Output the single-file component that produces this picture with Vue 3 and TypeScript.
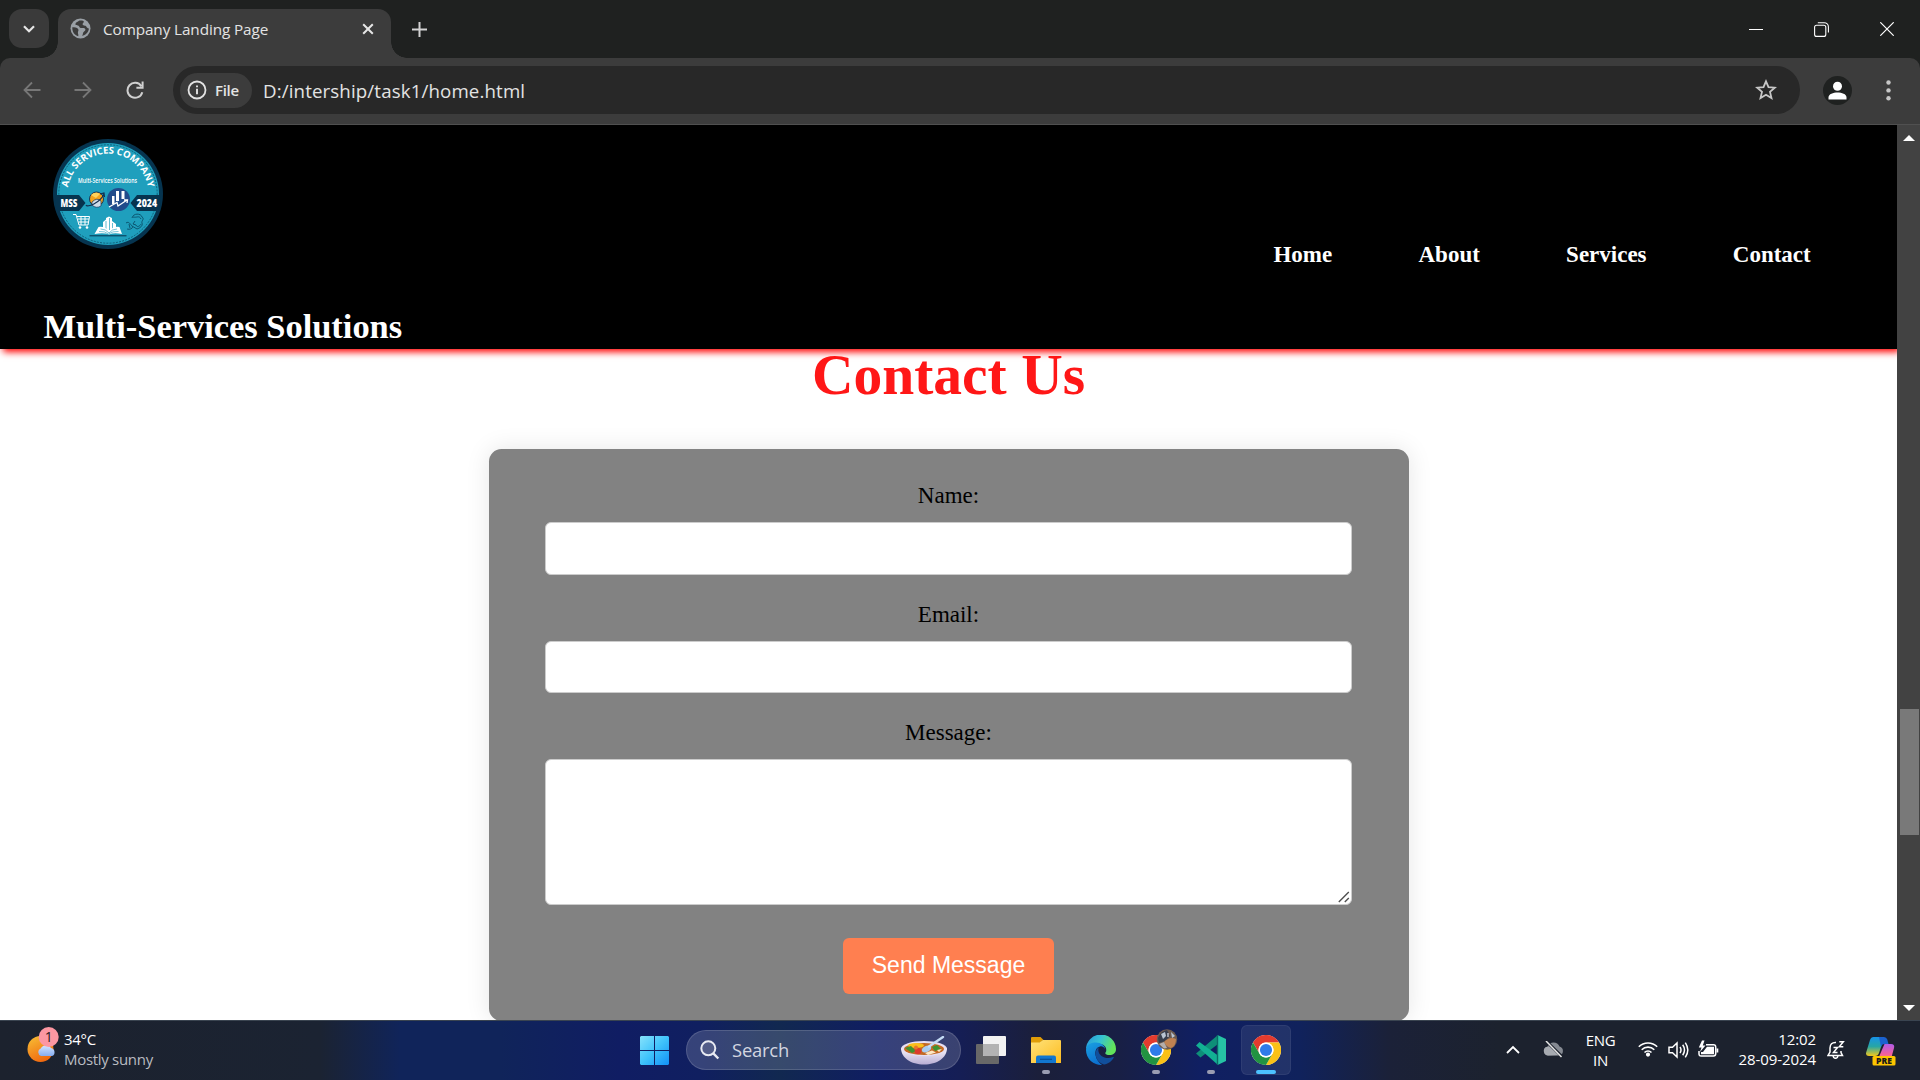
<script setup lang="ts">
import { ref } from 'vue'

const links: string[] = ['Home', 'About', 'Services', 'Contact']
const name = ref('')
const email = ref('')
const message = ref('')
</script>

<template>
  <div class="screen">
    <svg class="defs" width="0" height="0">
      <symbol id="chrome" viewBox="0 0 48 48">
        <circle cx="24" cy="24" r="24" fill="#fff" />
        <path d="M3.2 12A24 24 0 0 1 44.8 12H24A12 12 0 0 0 13.6 30Z" fill="#e33b2e" />
        <path d="M44.8 12A24 24 0 0 1 24 48L34.4 30A12 12 0 0 0 24 12Z" fill="#fbc116" />
        <path d="M24 48A24 24 0 0 1 3.2 12L13.6 30A12 12 0 0 0 34.4 30Z" fill="#229342" />
        <circle cx="24" cy="24" r="12" fill="#fff" />
        <circle cx="24" cy="24" r="9.7" fill="#2f7bea" />
      </symbol>
    </svg>

    <div class="tabstrip">
      <div class="tab-search">
        <svg width="12" height="8" viewBox="0 0 12 8"><path d="M1 1.2l5 5 5-5" fill="none" stroke="#e6e6e6" stroke-width="2.2" /></svg>
      </div>
      <div class="tab">
        <svg width="21" height="21" viewBox="0 0 21 21">
          <circle cx="10.5" cy="10.5" r="10" fill="#9aa0a6" />
          <path d="M9.4 2.6c-1 1.300-3.800 1.600-4 3.400-.1 1.300 1.400 1.300 2.600 1.400 1.600.1 1.100 2.300 2.600 2.600 1.500.3 3.800-.6 4.600.9.9 1.700-1.400 2.300-2 3.600-.4 1-.2 2.400-1.300 3.200 3.700-.5 6.900-3.800 7-7.300-1.300-.1-2.100-.8-2.600-1.900-.8-1.300-3.400-.5-3.700-2.200-.2-1.200 1.300-1.600 1.300-2.500 0-.8-1.800-1.400-4.500-1.200z" fill="#3c3c3c" />
          <path d="M2.300 9.300c2.200.1 4.700.2 5.800 1.800.9 1.300-.1 2.200-.2 3.300-.1 1.200.9 2.400.3 3.800-3.500-.8-6.100-4.300-5.900-8.900z" fill="#3c3c3c" />
        </svg>
        <span class="tab-title">Company Landing Page</span>
        <svg width="12" height="12" viewBox="0 0 12 12"><path d="M1.200 1.200l9.600 9.600M10.800 1.200L1.200 10.800" stroke="#e6e6e6" stroke-width="2" /></svg>
      </div>
      <svg class="plus" width="15" height="15" viewBox="0 0 15 15"><path d="M7.500 0v15M0 7.500h15" stroke="#d2d2d2" stroke-width="2" /></svg>
      <div class="win">
        <svg width="14" height="14" viewBox="0 0 14 14"><path d="M0 7.500h14" stroke="#fff" /></svg>
        <svg width="15" height="15" viewBox="0 0 15 15" fill="none" stroke="#fff" stroke-width="1.100"><rect x=".6" y="3.200" width="11.200" height="11.200" rx="2" /><path d="M3.800.7h6.400a4.200 4.200 0 0 1 4.200 4.200v5.600" /></svg>
        <svg width="14" height="14" viewBox="0 0 14 14"><path d="M.3.3l13.400 13.400M13.700.3L.3 13.700" stroke="#fff" stroke-width="1.200" /></svg>
      </div>
    </div>

    <div class="toolbar">
      <div class="corners"><div class="toolbar-body">
        <svg class="i-back" width="18" height="18" viewBox="0 0 18 18"><path d="M17.500 9H1.800M9 1.500L1.500 9 9 16.500" fill="none" stroke="#777" stroke-width="1.800" /></svg>
        <svg class="i-fwd" width="18" height="18" viewBox="0 0 18 18"><path d="M.5 9h15.700M9 1.500L16.500 9 9 16.500" fill="none" stroke="#777" stroke-width="1.800" /></svg>
        <svg class="i-reload" width="18" height="18" viewBox="0 0 18 18"><path d="M15.300 5.200A7.500 7.500 0 1 0 16.300 11.200M16.600.6v6.200h-6.200" fill="none" stroke="#d0d0d0" stroke-width="2" /></svg>
        <div class="omnibox">
          <div class="chip">
            <svg width="20" height="20" viewBox="0 0 20 20"><circle cx="10" cy="10" r="8.500" fill="none" stroke="#e3e3e3" stroke-width="1.800" /><path d="M10 8.800v5.400M10 5.400v1.900" stroke="#e3e3e3" stroke-width="1.900" /></svg>
            <span>File</span>
          </div>
          <span class="url">D:/intership/task1/home.html</span>
          <svg class="star" width="24" height="24" viewBox="0 0 24 24"><path d="M12 3.300l2.500 5.900 6.300.5-4.800 4.200 1.500 6.200-5.500-3.300-5.500 3.300L8 13.900 3.200 9.700l6.300-.5z" fill="none" stroke="#c7c7c7" stroke-width="1.800" /></svg>
        </div>
        <svg class="avatar" width="29" height="29" viewBox="0 0 29 29"><circle cx="14.500" cy="14.500" r="14.500" fill="#1f2120" /><circle cx="14.500" cy="10.300" r="4.500" fill="#fff" /><path d="M5.500 23.500v-2c0-3.600 4.800-5 9-5s9 1.400 9 5v2z" fill="#fff" /></svg>
        <svg class="dots" width="5" height="21" viewBox="0 0 5 21" fill="#c7c7c7"><circle cx="2.500" cy="2.500" r="2.200" /><circle cx="2.500" cy="10.400" r="2.200" /><circle cx="2.500" cy="18.300" r="2.200" /></svg>
      </div></div>
    </div>

    <div class="viewport">
      <div class="page">
        <header>
          <div class="brand">
            <svg class="logo" width="110" height="110" viewBox="0 0 110 110">
              <defs><path id="arc" d="M14.800 49.500A40.600 40.600 0 0 1 95.200 49.500" /></defs>
              <circle cx="55" cy="55" r="55" fill="#06344f" />
              <circle cx="55" cy="55" r="51" fill="#1f9fbd" />
              <circle cx="55" cy="55" r="49.200" fill="none" stroke="#0b4f68" stroke-width=".8" stroke-dasharray="2 1.200" />
              <text class="ring" fill="#fff"><textPath href="#arc" startOffset="50%" text-anchor="middle" textLength="114" lengthAdjust="spacingAndGlyphs">ALL SERVICES COMPANY</textPath></text>
              <text x="25" y="43.500" class="tiny" textLength="59" lengthAdjust="spacingAndGlyphs">Multi-Services Solutions</text>
              <path d="M3 56h23l6.500 8-6.500 8H3A55 55 0 0 1 3 56zM107 56H84l-6.500 8 6.500 8h23a55 55 0 0 0 0-16z" fill="#06344f" />
              <text x="7.500" y="67.700" class="plate" textLength="17" lengthAdjust="spacingAndGlyphs">MSS</text>
              <text x="83.500" y="67.700" class="plate" textLength="20.500" lengthAdjust="spacingAndGlyphs">2024</text>
              <circle cx="43.500" cy="60" r="7" fill="#f4a31c" stroke="#14375c" />
              <path d="M38 56q4-4 9-1l-4 4z" fill="#ffd35c" />
              <path d="M39 63q5-5 9-1v5q-5 3-9-1z" fill="#cfdce8" stroke="#14375c" stroke-width=".7" />
              <path d="M33 66c1 3 14-2 18-11M47 55l4-1 .5 4" fill="none" stroke="#132d4d" stroke-width="1.100" />
              <circle cx="65.500" cy="60.500" r="11.500" fill="#214b8b" />
              <path d="M59 57h2.500v8H59zM63 52h3v10h-3zM68.500 52h3v8h-3z" fill="#fff" />
              <path d="M56 68l8-4.500 1 3.500 9-6M71 61h3.500l-.5 3" fill="none" stroke="#fff" stroke-width="1.300" />
              <path d="M20 75.500h3l3 10.500h9l1.500-8.500H24M25 80h11M25.500 83h10M28 77.500V86M32 77.500V86" fill="none" stroke="#fff" stroke-width="1" />
              <circle cx="27" cy="88.500" r="1.300" fill="#fff" /><circle cx="34" cy="88.500" r="1.300" fill="#fff" />
              <path d="M50 92V83l3-2.500V79l3-1.500 3 1.500v3l4 3v7z" fill="#fff" />
              <path d="M53 82v9M56.500 79v12M59.500 84v7" stroke="#1f9fbd" stroke-width=".7" />
              <path d="M41.500 95l4-7q6-1 10.500 4 4.500-5 10.500-4l2.500 7q-8-1.500-13 .5-5-2-14.500-.5z" fill="#fff" />
              <path d="M46 92.500q6-.5 9.500 2.500 4-3 10-2.500M47.500 90q5-.2 8.500 4 3-4 8-4" fill="none" stroke="#1f9fbd" stroke-width=".6" />
              <path d="M36.500 96.800h37" stroke="#06344f" />
              <path d="M79 79c1-5 9-5 10-1 3 2-1 4 0 6 1 3-2 5-5 6M80 78c4 1 6-2 8 2M82 82l-2 3 3 1c1 3 4 1 5-1M73 84c3-2 4 1 6 3s-2 4-5 3M76 85l1 4M79 87l5 3" fill="none" stroke="#0b5570" stroke-width="1" />
            </svg>
            <h2>Multi-Services Solutions</h2>
          </div>
          <nav><a v-for="l in links" :key="l">{{ l }}</a></nav>
        </header>
        <h1>Contact Us</h1>
        <form class="card" @submit.prevent>
          <label for="name">Name:</label>
          <input id="name" v-model="name" type="text" />
          <label for="email">Email:</label>
          <input id="email" v-model="email" type="email" />
          <label for="message">Message:</label>
          <div class="area">
            <textarea id="message" v-model="message"></textarea>
            <svg class="grip" width="12" height="12" viewBox="0 0 12 12"><path d="M.8 11L10.800 1M6.800 11l4-4" stroke="#505050" stroke-width="1.400" /></svg>
          </div>
          <button type="submit">Send Message</button>
        </form>
      </div>
      <div class="scrollbar">
        <svg width="12" height="6" viewBox="0 0 12 6"><path d="M0 6L6 0l6 6z" fill="#fff" /></svg>
        <div class="thumb"></div>
        <svg class="down" width="12" height="6" viewBox="0 0 12 6"><path d="M0 0l6 6 6-6z" fill="#fff" /></svg>
      </div>
    </div>

    <div class="taskbar">
      <div class="weather">
        <svg width="34" height="36" viewBox="0 0 34 36">
          <defs>
            <linearGradient id="sun" x1="0" y1="0" x2=".5" y2="1"><stop offset="0" stop-color="#f8c136" /><stop offset="1" stop-color="#f06a10" /></linearGradient>
            <linearGradient id="cloud" x1="0" y1="0" x2="0" y2="1"><stop offset="0" stop-color="#d5e5ff" /><stop offset="1" stop-color="#86adf0" /></linearGradient>
          </defs>
          <circle cx="13.500" cy="22" r="13" fill="url(#sun)" />
          <path d="M14 29a4 4 0 0 1-.3-7.500 6 6 0 0 1 10.300-.5 4.200 4.200 0 0 1 1 8z" fill="url(#cloud)" />
          <circle cx="21.700" cy="10" r="10" fill="#fc97a2" />
          <text x="21.700" y="15" text-anchor="middle" class="badge">1</text>
        </svg>
        <div class="two"><span>34°C</span><span class="dim">Mostly sunny</span></div>
      </div>

      <div class="apps">
        <svg class="start" width="29" height="29" viewBox="0 0 29 29">
          <defs><linearGradient id="win" x1="0" y1="0" x2="1" y2="1"><stop offset="0" stop-color="#87e2fb" /><stop offset=".5" stop-color="#3fc3fb" /><stop offset="1" stop-color="#1290f6" /></linearGradient></defs>
          <path d="M1 0h13v14H0V1zM15 0h13l1 1v13H15zM0 15h14v14H1l-1-1zM15 15h14v13l-1 1H15z" fill="url(#win)" />
        </svg>
        <div class="search">
          <svg width="20" height="20" viewBox="0 0 20 20"><circle cx="8.300" cy="8.300" r="7" fill="#6d7699" fill-opacity=".5" stroke="#e8eaf2" stroke-width="2" /><path d="M13.300 13.300l5 5.200" stroke="#e8eaf2" stroke-width="2.400" /></svg>
          <span>Search</span>
          <svg class="bowl" width="46" height="29" viewBox="0 0 46 29">
            <defs><linearGradient id="bw" x1="0" y1="0" x2="0" y2="1"><stop offset="0" stop-color="#f7f4fc" /><stop offset="1" stop-color="#b9aed4" /></linearGradient></defs>
            <path d="M0 12c0 10 10 16.500 23 16.500S46 22 46 12z" fill="url(#bw)" />
            <ellipse cx="23" cy="12.500" rx="23" ry="7.500" fill="#e6dff2" />
            <ellipse cx="23" cy="13" rx="20" ry="6" fill="#c46a24" />
            <ellipse cx="15" cy="9.500" rx="8" ry="2.600" fill="#f9bf1c" />
            <path d="M4 12l6-2 5 5-4 2zM31 11l5-2 4 4-6 2z" fill="#3f9330" />
            <circle cx="17" cy="15" r="3.300" fill="#dc3b2d" /><circle cx="15" cy="11.500" r="2" fill="#e9772a" />
            <path d="M24 17l7-2.500 4 2-8 2.500zM36 14l5-1-3 3z" fill="#fce7c2" />
            <ellipse cx="25.500" cy="13" rx="5" ry="3" transform="rotate(-25 25.500 13)" fill="#a9cdf0" />
            <path d="M28 10.500L42 1" stroke="#c5dcf5" stroke-width="2.400" stroke-linecap="round" />
          </svg>
        </div>
        <svg class="tv" width="30" height="28" viewBox="0 0 30 28"><rect x="0" y="8" width="23" height="20" rx="1" fill="#686868" /><rect x="7" y="0" width="23" height="20" rx="1" fill="#f2f2f2" /><path d="M7 8h16v12H8a1 1 0 0 1-1-1z" fill="#b3b3b3" /></svg>
        <div class="app">
          <svg width="30" height="30" viewBox="0 0 30 30">
            <defs><linearGradient id="fo" x1="0" y1="0" x2="1" y2="1"><stop offset="0" stop-color="#ffe27a" /><stop offset="1" stop-color="#fdbc1f" /></linearGradient></defs>
            <path d="M0 8V3q0-1 1-1h8.500l3 3-4 3z" fill="#e09d08" />
            <path d="M0 7.500h8.500L12 5h17q1 0 1 1v22H0z" fill="url(#fo)" />
            <path d="M5 28v-5.500Q5 20.500 7 20.500h16q2 0 2 2V28z" fill="#1277cf" /><path d="M9 24.300h12" stroke="#0b4f94" stroke-width="1.200" />
          </svg><i class="run"></i>
        </div>
        <div class="app">
          <svg width="30" height="30" viewBox="0 0 30 30">
            <defs>
              <linearGradient id="e1" x1="0" y1="0" x2="1" y2=".35"><stop offset="0" stop-color="#2695dc" /><stop offset=".5" stop-color="#35c1d4" /><stop offset="1" stop-color="#62e45b" /></linearGradient>
              <linearGradient id="e2" x1="0" y1="0" x2=".5" y2="1"><stop offset="0" stop-color="#1aa1e2" /><stop offset="1" stop-color="#0c6fd0" /></linearGradient>
            </defs>
            <path d="M0 15A15 15 0 0 1 30 14c0 4-3 6-6.500 6-3 0-4.800-1-4-2.400 2-3 .3-8.600-6.500-8.600C7 9 0 11 0 15z" fill="url(#e1)" />
            <path d="M0 15C0 9 6 7.500 10 7.500c5 0 9 3 9 6.500-1-2-3-3-5-2.500C7 13 8 24 16 29.900A15 15 0 0 1 0 15z" fill="url(#e2)" />
            <path d="M13 12c-6 4-4 15 5 17.600 4-.6 8-3.600 9.700-6.800.3-.6-.2-1-.8-.7-7 3-14-1.400-14.500-6.100-.1-1.500 0-3 .6-4z" fill="#114f9c" />
          </svg>
        </div>
        <div class="app">
          <svg class="with-face" width="40" height="36" viewBox="0 0 40 36">
            <use href="#chrome" x="0" y="6" width="30" height="30" />
            <circle cx="26" cy="10.500" r="10.200" fill="#6c5a50" />
            <path d="M17 9q3-7 9-8l3 6-5 5-6 2z" fill="#373e4c" />
            <path d="M20 5l4-2 1 4-3 3zM30 3l4 4-3 2z" fill="#b9c5d3" />
            <path d="M23 13q6-6 12-3 0 7-5 9-5-1-7-6z" fill="#c08252" />
            <path d="M18 15l5-2 3 6-3 .5z" fill="#b5aeab" /><path d="M27 4v4" stroke="#d5d5dc" stroke-width="1.300" />
          </svg><i class="run"></i>
        </div>
        <div class="app">
          <svg width="30" height="30" viewBox="0 0 30 30">
            <path d="M0 18.500L22 0v9L4.500 22.500z" fill="#0e8f78" />
            <path d="M0 10.500l3.500-3.500L22 20.500V30z" fill="#12b093" />
            <path d="M21.500 0L30 4v22l-8.500 4z" fill="#26c3a5" /><path d="M21.500 0v30" stroke="#0b6b69" stroke-width="1.400" />
          </svg><i class="run"></i>
        </div>
        <div class="app active">
          <svg width="30" height="30"><use href="#chrome" width="30" height="30" /></svg><i class="run on"></i>
        </div>
      </div>

      <div class="tray">
        <svg width="14" height="9" viewBox="0 0 14 9"><path d="M1 8l6-6 6 6" fill="none" stroke="#fff" stroke-width="1.800" /></svg>
        <svg class="cl" width="21" height="17" viewBox="0 0 21 17"><path d="M5 14.500a4.600 4.600 0 0 1-.4-9A6.500 6.500 0 0 1 16.500 5.500a4.600 4.600 0 0 1-.5 9z" fill="#858a92" /><path d="M5 14.500a4.600 4.600 0 0 1-2-8.500q6-1 9 3l6 5z" fill="#a6aab0" /><path d="M3 0l16.500 16" stroke="#1c222d" stroke-width="3" /><path d="M3 0l15.500 16" stroke="#e8e8e8" stroke-width="1.500" /></svg>
        <div class="two lang"><span>ENG</span><span>IN</span></div>
        <svg class="wifi" width="20" height="16" viewBox="0 0 20 16" fill="none" stroke="#fff" stroke-width="1.600"><path d="M.8 5.800a13 13 0 0 1 18.400 0M3.700 8.700a9 9 0 0 1 12.600 0M6.500 11.500a5 5 0 0 1 7 0" /><circle cx="10" cy="13.600" r="1.300" fill="#fff" /></svg>
        <svg class="vol" width="21" height="18" viewBox="0 0 21 18" fill="none" stroke="#fff" stroke-width="1.500"><path d="M1 6.200h3.500L9 2v14l-4.500-4.200H1zM12 6q2 3 0 6M14.700 3.800q3.600 5.200 0 10.400M17.300 1.600q5 7.400 0 14.800" /></svg>
        <svg class="bat" width="21" height="18" viewBox="0 0 21 18"><path d="M8 4.800h7.500q2.200 0 2.200 2.200v6.800q0 2.200-2.200 2.200H3.200Q1 16 1 13.800V11" fill="none" stroke="#fff" stroke-width="1.500" /><path d="M9 6.700h7v7.500H3V12h2zM18.500 8.500h1.800v4h-1.800z" fill="#fff" /><path d="M4 .5L.8 7.500h2.700L2 12l5.500-6.500H4.800L6.500.5z" fill="#fff" /></svg>
        <div class="two clock"><span>12:02</span><span>28-09-2024</span></div>
        <svg class="bell" width="18" height="18" viewBox="0 0 18 18" fill="none" stroke="#fff"><path d="M9 1.500C5 1.200 3 3.500 3 7v4l-2 3.500h14.500L14 11.500V10M6 14.800q.5 2.500 2.500 2.500t2.500-2.500" stroke-width="1.500" /><path d="M6.500 6.500h4l-4 5h4M12.300.8h4l-4 5h4" stroke-width="1.500" /></svg>
        <svg class="copilot" width="30" height="29" viewBox="0 0 30 29">
          <defs>
            <linearGradient id="c1" x1="0" y1="0" x2="0" y2="1"><stop offset="0" stop-color="#1793e8" /><stop offset=".5" stop-color="#27a6a5" /><stop offset="1" stop-color="#f2c81c" /></linearGradient>
            <linearGradient id="c2" x1="0" y1="0" x2="0" y2="1"><stop offset="0" stop-color="#b05be8" /><stop offset=".6" stop-color="#f2609d" /><stop offset="1" stop-color="#fb9a5a" /></linearGradient>
          </defs>
          <path d="M7.500 0h10.500l-1 4-4 12q-1 3-4 3H3q-4 0-2.700-4L4 3Q5 0 7.500 0z" fill="url(#c1)" />
          <path d="M13 0h5q2.500 0 3.300 2.500L22.500 7H18q-2 0-3 3z" fill="#1b62cf" />
          <path d="M18.500 7H25q4 0 3 4l-3.500 13H14q-2.500 0-2-2z" fill="url(#c2)" />
          <rect x="6.500" y="19" width="23" height="9.500" rx="1.500" fill="#fdc500" />
          <text x="18" y="26.500" text-anchor="middle" class="pre">PRE</text>
        </svg>
      </div>
    </div>
  </div>
</template>

<style>
html, body { margin: 0; overflow: hidden; background: #fff; }
</style>

<style scoped>
* { box-sizing: border-box; }
svg { display: block; flex: none; }
.defs { position: absolute; }
.screen { width: 1920px; height: 1080px; overflow: hidden; display: flex; flex-direction: column; font-family: "Open Sans", "Noto Sans", sans-serif; }
span { white-space: nowrap; }

.tabstrip { height: 58px; flex: none; background: #1f2120; display: flex; align-items: flex-start; padding-left: 9px; }
.tab-search { width: 40px; height: 39px; margin-top: 9px; border-radius: 13px; background: #3a3a3a; display: flex; align-items: center; justify-content: center; }
.tab { position: relative; width: 333px; height: 49px; margin: 9px 0 0 8.500px; background: #3c3c3c; border-radius: 13px 13px 0 0; display: flex; align-items: center; padding: 0 17px 10px 12.500px; }
.tab::before, .tab::after { content: ""; position: absolute; bottom: 0; width: 16px; height: 16px; }
.tab::before { left: -16px; background: radial-gradient(circle at 0 0, transparent 15.500px, #3c3c3c 16px); }
.tab::after { right: -16px; background: radial-gradient(circle at 100% 0, transparent 15.500px, #3c3c3c 16px); }
.tab-title { flex: 1; margin-left: 12px; font-size: 15.300px; letter-spacing: -.1px; color: #e3e3e3; line-height: 20px; }
.plus { margin: 21.500px 0 0 21.500px; }
.win { flex: 1; display: flex; justify-content: flex-end; gap: 51px; padding: 22px 26px 0 0; }

.toolbar { height: 67px; flex: none; background: #1f2120; }
.corners { height: 67px; background: #3c3c3c; border-radius: 10px 10px 0 0; border-bottom: 1px solid #505050; }
.toolbar-body { height: 64px; display: flex; align-items: center; padding-left: 23px; }
.i-fwd { margin-left: 33px; }
.i-reload { margin-left: 34px; }
.omnibox { margin-left: 29px; width: 1627px; height: 48px; border-radius: 24px; background: #282828; display: flex; align-items: center; padding: 0 22px 0 7px; }
.chip { width: 72px; height: 35px; border-radius: 18px; background: #3c3c3c; display: flex; align-items: center; padding-left: 7px; font-size: 15px; font-weight: 600; letter-spacing: -.3px; color: #e3e3e3; }
.chip span { margin-left: 8px; line-height: 20px; }
.url { flex: 1; margin-left: 11px; padding-top: 2px; font-size: 18.700px; letter-spacing: .13px; color: #e3e3e3; line-height: 24px; }
.avatar { margin-left: 23px; }
.dots { margin-left: 34px; }

.viewport { height: 895px; flex: none; display: flex; background: #fff; overflow: hidden; }
.page { width: 1897px; flex: none; overflow: hidden; font-family: "Liberation Serif", serif; display: flex; flex-direction: column; align-items: center; }
header { position: relative; z-index: 1; width: 100%; height: 224px; flex: none; background: #000; color: #fff; box-shadow: 3px 3px 7px red; display: flex; justify-content: space-between; }
.brand { padding: 14px 0 0 43.500px; }
.logo { margin-left: 9.500px; }
h2 { margin: 57px 0 0; font-size: 34.500px; line-height: 40px; letter-spacing: -.03px; white-space: nowrap; }
nav { display: flex; gap: 86.250px; padding: 117px 86.250px 0 0; font-size: 23px; font-weight: 700; line-height: 26px; }
h1 { margin: 0; font-size: 57.500px; line-height: 51px; color: #ff1717; }
.card { width: 920px; height: 572px; flex: none; margin-top: 49px; padding: 34px 57px 0 56px; border-radius: 12.500px; background: #828282; box-shadow: 0 0 25px rgba(0, 0, 0, .1); display: flex; flex-direction: column; align-items: center; }
label { font-size: 23px; line-height: 26px; color: #000; margin-bottom: 13px; padding-left: 1px; }
input, textarea { width: 807px; border: 1px solid #ccc; border-radius: 6px; background: #fff; margin: 0; display: block; outline: 0; }
input { height: 52.500px; margin-bottom: 27px; flex: none; }
#email { height: 52px; margin-bottom: 27.500px; }
.area { position: relative; height: 146px; flex: none; }
textarea { height: 146px; resize: none; }
.grip { position: absolute; right: 2px; bottom: 2px; }
button { margin-top: 33px; width: 211px; height: 56px; border: 0; border-radius: 6px; background: #ff7f50; color: #fff; font: 23px/54px "Liberation Sans", sans-serif; padding: 0 0 2px 1px; }
.scrollbar { width: 23px; background: #424242; display: flex; flex-direction: column; align-items: center; padding: 10px 0 9px; }
.thumb { width: 19px; height: 126px; margin: 568px 0 0 1px; background: #797979; }
.down { margin-top: auto; }

.ring { font: 700 9.400px "Open Sans", sans-serif; }
.tiny { font: 600 6.200px "Open Sans", sans-serif; fill: #fff; }
.plate { font: 800 11px "Open Sans", sans-serif; fill: #fff; }
.badge { font: 14px "Open Sans", sans-serif; fill: #2a1a1c; }
.pre { font: 800 8.500px "Open Sans", sans-serif; fill: #1a1a1a; }

.taskbar { height: 60px; flex: none; border-top: 1px solid #3a4450; display: flex; color: #fff; background: linear-gradient(90deg, #1c222e 0, #1b2332 320px, #10245a 400px, #10245a 500px, #101d63 620px, #101f60 700px, #112850 780px, #101d63 880px, #151e55 960px, #1b1f3a 1040px, #181f45 1120px, #101f62 1200px, #10225c 1300px, #1b2138 1390px, #1c222e 1500px); }
.weather { width: 640px; display: flex; padding: 6px 0 0 27px; }
.two { display: flex; flex-direction: column; font-size: 15px; line-height: 20px; letter-spacing: -.3px; }
.weather .two { margin: 2px 0 0 3px; }
.dim { color: #b9bcc1; }
.apps { display: flex; width: 651px; }
.start { margin-top: 15px; }
.search { width: 275px; height: 40px; margin: 9px 0 0 17px; border-radius: 20px; background: rgba(255, 255, 255, .16); border: 1px solid rgba(255, 255, 255, .14); display: flex; align-items: center; padding: 0 13px 0 13px; font-size: 18.400px; letter-spacing: -.2px; color: #d3d6e0; }
.search span { flex: 1; margin-left: 12px; padding-bottom: 2px; }
.tv { margin: 15px 12px 0 15px; }
.app { width: 50px; height: 50px; margin: 4px 0 0 3px; border-radius: 6px; display: flex; flex-direction: column; align-items: center; padding-top: 10px; }
.app + .app { margin-left: 5px; }
.active { background: rgba(255, 255, 255, .08); border: 1px solid rgba(255, 255, 255, .06); padding-top: 9px; }
.with-face { margin: -6px 0 0 10px; }
.run { width: 8px; height: 4px; border-radius: 2px; background: #9a9db2; margin-top: 5px; }
.on { width: 20px; background: #4cc2ff; }
.tray { flex: 1; display: flex; padding-left: 215px; }
.tray > svg:first-child { margin-top: 24px; }
.cl { margin: 20px 0 0 22.500px; }
.lang { width: 40px; margin: 9px 0 0 17px; align-items: center; }
.wifi { margin: 20px 0 0 17.500px; }
.vol { margin: 20px 0 0 10px; }
.bat { margin: 19px 0 0 9px; }
.clock { width: 97px; margin-top: 8px; align-items: flex-end; letter-spacing: -.08px; }
.bell { margin: 20px 0 0 11px; }
.copilot { margin: 16px 0 0 21px; }
</style>
